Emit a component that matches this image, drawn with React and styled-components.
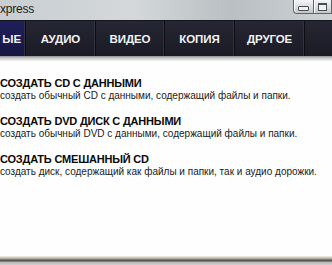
import React from "react";
import styled, { createGlobalStyle } from "styled-components";

const GlobalStyle = createGlobalStyle`
  html, body {
    margin: 0;
    padding: 0;
    background: #ffffff;
  }
  body {
    width: 332px;
    height: 265px;
    overflow: hidden;
    font-family: "Liberation Sans", Arial, sans-serif;
  }
`;

const tabs = [
  { label: "ЫЕ", active: true, width: 26 },
  { label: "АУДИО", width: 70 },
  { label: "ВИДЕО", width: 69 },
  { label: "КОПИЯ", width: 70 },
  { label: "ДРУГОЕ", width: 70 },
  { label: "", width: 40 },
];

const items = [
  {
    title: "СОЗДАТЬ CD С ДАННЫМИ",
    text: "создать обычный CD с данными, содержащий файлы и папки.",
  },
  {
    title: "СОЗДАТЬ DVD ДИСК С ДАННЫМИ",
    text: "создать обычный DVD с данными, содержащий файлы и папки.",
  },
  {
    title: "СОЗДАТЬ СМЕШАННЫЙ CD",
    text: "создать диск, содержащий как файлы и папки, так и аудио дорожки.",
  },
];

const App = () => {
  return (
    <>
      <GlobalStyle />
      <Window>
        <TitleBar>
          <Title>xpress</Title>
          <Controls>
            <CtrlButton $first>
              <MinGlyph />
            </CtrlButton>
            <CtrlButton>
              <MaxGlyph />
            </CtrlButton>
          </Controls>
        </TitleBar>
        <NavBar>
          {tabs.map((t, i) => (
            <Tab key={i} $active={t.active} $width={t.width} $left={i === 0}>
              {t.label}
            </Tab>
          ))}
        </NavBar>
        <NavShadow />
        <Content>
          {items.map((it) => (
            <Item key={it.title}>
              <ItemTitle>{it.title}</ItemTitle>
              <ItemText>{it.text}</ItemText>
            </Item>
          ))}
        </Content>
        <BottomEdge />
      </Window>
    </>
  );
};

const Window = styled.div`
  display: flex;
  flex-direction: column;
  width: 332px;
  height: 265px;
  overflow: hidden;
  background: #fefefe;
`;

const TitleBar = styled.div`
  display: flex;
  justify-content: space-between;
  align-items: flex-start;
  height: 20px;
  background: linear-gradient(90deg, #c9ced2 0%, #d4d8da 40%, #b9bfc2 70%, #cdd2d5 100%);
`;

const Title = styled.div`
  padding: 2px 0 0 0;
  font-family: "Liberation Sans", Arial, sans-serif;
  font-size: 12px;
  line-height: 14px;
  letter-spacing: -0.2px;
  color: #1c1c1c;
`;

const Controls = styled.div`
  display: flex;
  height: 14px;
`;

const CtrlButton = styled.div`
  display: flex;
  align-items: center;
  justify-content: center;
  width: ${(p) => (p.$first ? "19px" : "17px")};
  height: 13px;
  background: linear-gradient(180deg, #f4f5f6 0%, #dfe2e4 45%, #c3c7ca 100%);
  border: 1px solid #5f6366;
  border-top: none;
  border-right: ${(p) => (p.$first ? "none" : "1px solid #5f6366")};
  border-radius: ${(p) => (p.$first ? "0 0 0 4px" : "0")};
  box-shadow: inset 1px 0 0 #ffffff;
`;

const MinGlyph = styled.div`
  width: 9px;
  height: 3px;
  margin-top: 4px;
  background: #f0f0f0;
  border: 1px solid #4a4e52;
  border-radius: 1px;
`;

const MaxGlyph = styled.div`
  width: 7px;
  height: 5px;
  border: 1px solid #4a4e52;
  border-top-width: 2px;
  background: #f0f0f0;
`;

const NavBar = styled.div`
  display: flex;
  height: 35px;
  background: linear-gradient(180deg, #262634 0%, #20202c 55%, #1b1b26 100%);
  border-top: 1px solid #15151d;
`;

const Tab = styled.div`
  flex: none;
  display: flex;
  align-items: center;
  justify-content: ${(p) => (p.$left ? "flex-end" : "center")};
  width: ${(p) => p.$width}px;
  padding-right: ${(p) => (p.$left ? "4px" : "0")};
  box-sizing: border-box;
  border-right: 1px solid #0c0c12;
  box-shadow: inset -1px 0 0 #33333f;
  background: ${(p) =>
    p.$active
      ? "linear-gradient(180deg, #1f1e5a 0%, #1a1a4e 60%, #16163f 100%)"
      : "transparent"};
  color: #f2f2f2;
  font-family: "Liberation Sans", Arial, sans-serif;
  font-weight: bold;
  font-size: 11.5px;
  letter-spacing: -0.1px;

  &:last-child {
    border-right: none;
    box-shadow: none;
  }
`;

const NavShadow = styled.div`
  height: 5px;
  background: linear-gradient(180deg, #8e8e8e 0%, #c6c6c6 40%, #f4f4f4 100%);
`;

const Content = styled.div`
  flex: 1;
  display: flex;
  flex-direction: column;
  gap: 14px;
  padding: 16px 0 0 0;
`;

const Item = styled.div`
  display: flex;
  flex-direction: column;
  gap: 1px;
`;

const ItemTitle = styled.div`
  font-family: "Liberation Sans", Arial, sans-serif;
  font-weight: bold;
  font-size: 11px;
  line-height: 12px;
  letter-spacing: -0.2px;
  color: #0a0a0a;
`;

const ItemText = styled.div`
  font-family: "Liberation Sans", Arial, sans-serif;
  font-size: 10px;
  line-height: 11px;
  color: #1a1a1a;
`;

const BottomEdge = styled.div`
  height: 9px;
  background: linear-gradient(
    180deg,
    #fafafa 0px,
    #d9d4c4 1px,
    #c6c0ae 2px,
    #9d9a92 3px,
    #5c5c5c 4px,
    #4e4e4e 5px,
    #b4b4b4 6px,
    #d2d2d2 9px
  );
`;

export default App;
